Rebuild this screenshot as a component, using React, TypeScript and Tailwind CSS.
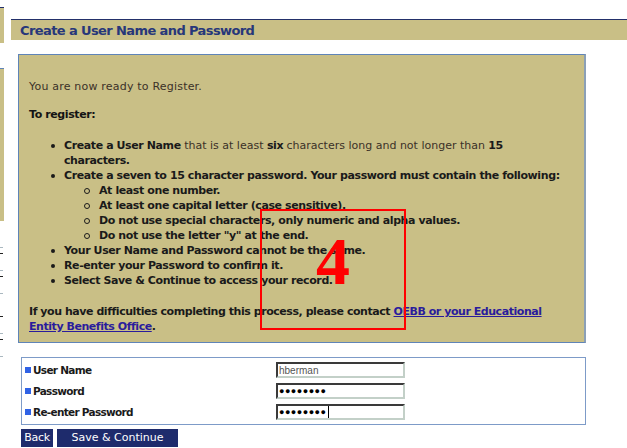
const tan = "bg-[#c9bf86]";

function Bullet() {
  return (
    <span className="flex h-[15px] w-[35px] shrink-0 items-center pl-[22px]">
      <span className="h-[4px] w-[4px] rounded-full bg-[#1a1a1a]" />
    </span>
  );
}

function Ring() {
  return (
    <span className="flex h-[15px] w-[35px] shrink-0 items-center pl-[20px]">
      <span className="h-[6px] w-[6px] rounded-full border border-[#1a1a1a]" />
    </span>
  );
}

function Field({ label, value, secret, caret }: { label: string; value: string; secret?: boolean; caret?: boolean }) {
  return (
    <div className="flex h-[16px] items-center">
      <div className="flex w-[254px] items-center gap-[2px] pl-[3px] text-[10.5px] font-bold tracking-[-0.7px] text-[#1a1a1a]">
        <span className="h-[6px] w-[6px] bg-[#2f62e6]" />
        {label}
      </div>
      <div className="flex h-[16px] w-[129px] items-center border-2 border-t-[#3a3a3a] border-l-[#3a3a3a] border-r-[#c3d0c8] border-b-[#c3d0c8] bg-white px-[1px]">
        {secret ? (
          <span className="font-['Liberation_Sans',sans-serif] text-[9px] tracking-[0.5px] text-black">
            {"●".repeat(value.length)}
          </span>
        ) : (
          <span className="font-['Liberation_Sans',sans-serif] text-[10px] text-[#555]">{value}</span>
        )}
        {caret && <span className="ml-[1px] h-[12px] w-[1px] bg-black" />}
      </div>
    </div>
  );
}

export default function App() {
  return (
    <div className="relative h-[448px] w-[627px] overflow-hidden bg-white font-['DejaVu_Sans',sans-serif] text-[11px] leading-[15px]">
      <div className="flex">
        {/* sliver of the window behind */}
        <div className="flex w-[4px] flex-col">
          <div className={`mt-[7px] h-[36px] border-t border-[#23306a] ${tan}`} />
          <div className={`mt-[25px] h-[153px] border-t border-[#5f84b8] ${tan}`} />
          <div className="mt-[26px] h-[1px] w-[3px] bg-[#aab8c0]" />
          <div className="mt-[5px] h-[1px] w-[3px] bg-[#222]" />
          <div className="mt-[16px] h-[1px] w-[3px] bg-[#aab8c0]" />
          <div className="mt-[5px] h-[1px] w-[3px] bg-[#222]" />
          <div className="mt-[16px] h-[1px] w-[3px] bg-[#aab8c0]" />
          <div className="mt-[22px] h-[1px] w-[3px] bg-[#222]" />
          <div className="mt-[16px] h-[1px] w-[3px] bg-[#aab8c0]" />
          <div className="mt-[5px] h-[1px] w-[3px] bg-[#222]" />
          <div className="mt-[16px] h-[1px] w-[3px] bg-[#aab8c0]" />
        </div>

        <main className="flex flex-1 flex-col pl-[7px] pt-[19px]">
          <h1 className={`flex h-[21px] items-center border-t border-[#23306a] ${tan} pl-[9px] text-[13px] font-bold tracking-[-0.6px] text-[#27377a]`}>
            Create a User Name and Password
          </h1>

          <section className={`ml-[7px] mt-[14px] w-[568px] border-l border-t border-[#5f84b8] border-r-2 border-r-[#8ba0b6] border-b border-b-[#5f84b8] ${tan} pb-[8px] pl-[10px] pt-[24px] tracking-[0.2px] text-[#3b3128]`}>
            <p>You are now ready to Register.</p>
            <p className="mt-[13px] font-bold tracking-[-0.4px] text-[#141414]">To register:</p>

            <ul className="mt-[16px] whitespace-nowrap font-bold tracking-[-0.4px] text-[#1a1a1a]">
              <li className="flex">
                <Bullet />
                <span>
                  Create a User Name{" "}
                  <span className="font-normal tracking-[0px] text-[#3b3128]">that is at least</span> six{" "}
                  <span className="font-normal tracking-[0px] text-[#3b3128]">characters long and not longer than</span> 15
                  <br />
                  characters.
                </span>
              </li>
              <li className="flex">
                <Bullet />
                <span>Create a seven to 15 character password. Your password must contain the following:</span>
              </li>
              {[
                "At least one number.",
                "At least one capital letter (case sensitive).",
                "Do not use special characters, only numeric and alpha values.",
                'Do not use the letter "y" at the end.',
              ].map((rule) => (
                <li key={rule} className="flex pl-[35px]">
                  <Ring />
                  <span>{rule}</span>
                </li>
              ))}
              {[
                "Your User Name and Password cannot be the same.",
                "Re-enter your Password to confirm it.",
                "Select Save & Continue to access your record.",
              ].map((step) => (
                <li key={step} className="flex">
                  <Bullet />
                  <span>{step}</span>
                </li>
              ))}
            </ul>

            <p className="mt-[16px] whitespace-nowrap font-bold tracking-[-0.45px] text-[#1a1a1a]">
              If you have difficulties completing this process, please contact{" "}
              <a href="#" className="text-[#2a1c9c] underline">
                OEBB or your Educational
              </a>
              <br />
              <a href="#" className="text-[#2a1c9c] underline">
                Entity Benefits Office
              </a>
              .
            </p>
          </section>

          <form className="ml-[10px] mt-[14px] flex w-[565px] flex-col gap-[5px] border border-[#7d9bc8] bg-white pb-[4px] pt-[4px]">
            <Field label="User Name" value="hberman" />
            <Field label="Password" value="hberman1" secret />
            <Field label="Re-enter Password" value="hberman1" secret caret />
          </form>

          <div className="ml-[10px] mt-[4px] flex gap-[4px] text-white">
            <button className="h-[18px] w-[32px] bg-[#1e2b6c] text-[11px] leading-[18px] tracking-[-0.3px]">Back</button>
            <button className="h-[18px] w-[121px] bg-[#1e2b6c] text-[11px] leading-[18px]">Save &amp; Continue</button>
          </div>
        </main>
      </div>

      {/* step annotation */}
      <div className="absolute left-[260px] top-[209px] h-[121px] w-[146px] border-2 border-[#ff0000]">
        <span className="absolute left-0 right-0 top-[16px] text-center font-['Liberation_Serif',serif] text-[68px] font-bold leading-none text-[#ff0000]">
          4
        </span>
      </div>
    </div>
  );
}
